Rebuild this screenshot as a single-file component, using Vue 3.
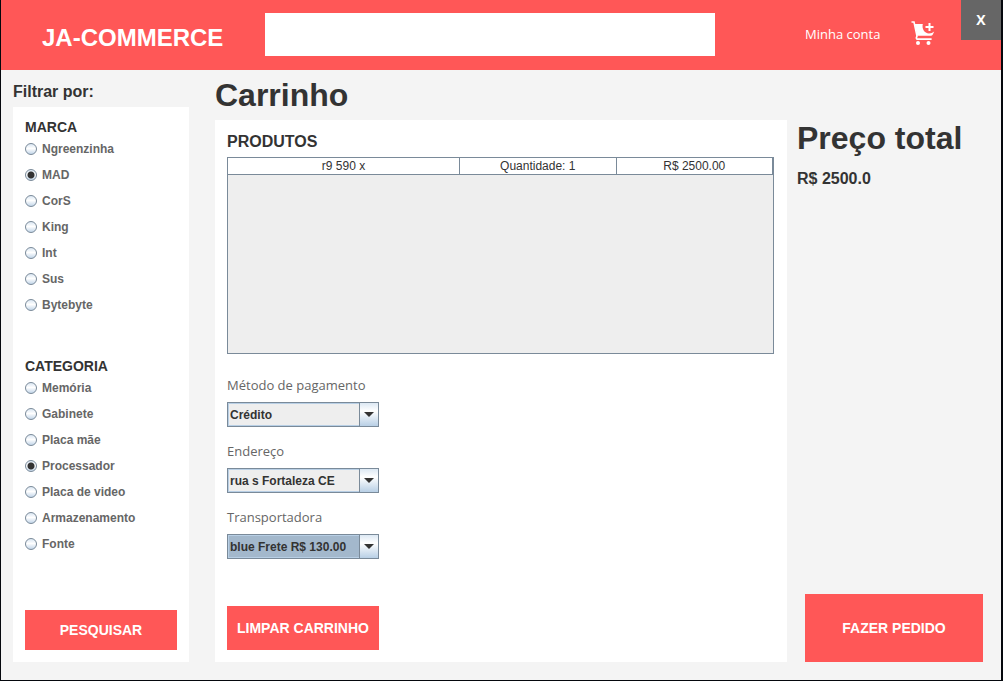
<script setup>
import { ref } from 'vue'

const search = ref('')
const brand = ref('MAD')
const category = ref('Processador')
const groups = [
  { title: 'MARCA', name: 'brand', model: brand, items: ['Ngreenzinha', 'MAD', 'CorS', 'King', 'Int', 'Sus', 'Bytebyte'] },
  { title: 'CATEGORIA', name: 'category', model: category, items: ['Memória', 'Gabinete', 'Placa mãe', 'Processador', 'Placa de video', 'Armazenamento', 'Fonte'] },
]
const products = [{ name: 'r9 590 x', quantity: 1, price: '2500.00' }]
const fields = [
  { id: 'payment', label: 'Método de pagamento', value: 'Crédito' },
  { id: 'address', label: 'Endereço', value: 'rua s Fortaleza CE' },
  { id: 'carrier', label: 'Transportadora', value: 'blue Frete R$ 130.00', active: true },
]
</script>

<template>
  <div class="window">
    <header class="topbar">
      <div class="brand">JA-COMMERCE</div>
      <input v-model="search" class="search" type="text" aria-label="Buscar" />
      <a class="account" href="#">Minha conta</a>
      <button class="cart" type="button" aria-label="Carrinho">
        <svg viewBox="0 0 24 24" width="24" height="24">
          <path d="M0.5 1H3L6 15" fill="none" stroke="#fff" stroke-width="1.6" />
          <path d="M3.6 3H11.8C10.6 8 13.5 12.2 18 12.4Q21 12.4 23.2 10.4L21.8 13.4Q21.2 14.8 19.8 14.8H6.2Z" fill="#fff" />
          <path d="M6.2 14.5L5.4 16.6Q5.2 18.2 7 18.2H20.6" fill="none" stroke="#fff" stroke-width="1.7" />
          <path d="M18.5 2V10M14.5 6H22.5" fill="none" stroke="#fff" stroke-width="2" />
          <circle cx="7" cy="22" r="2" fill="#fff" />
          <circle cx="17.5" cy="22" r="2" fill="#fff" />
        </svg>
      </button>
      <button class="close" type="button">X</button>
    </header>

    <div class="body">
      <aside class="sidebar">
        <h2 class="filter-title">Filtrar por:</h2>
        <form class="panel filters" @submit.prevent>
          <fieldset v-for="g in groups" :key="g.name" class="group">
            <legend>{{ g.title }}</legend>
            <label v-for="item in g.items" :key="item" class="option">
              <input v-model="g.model.value" type="radio" :name="g.name" :value="item" />
              {{ item }}
            </label>
          </fieldset>
          <button class="action search-button" type="submit">PESQUISAR</button>
        </form>
      </aside>

      <main class="main">
        <h1 class="heading">Carrinho</h1>
        <section class="panel order">
          <h2 class="products-title">PRODUTOS</h2>
          <div class="product-list">
            <table>
              <tbody>
                <tr v-for="p in products" :key="p.name">
                  <td class="name">{{ p.name }}</td>
                  <td>Quantidade: {{ p.quantity }}</td>
                  <td>R$ {{ p.price }}</td>
                </tr>
              </tbody>
            </table>
          </div>
          <div class="fields">
            <div v-for="f in fields" :key="f.id" class="field">
              <label :for="f.id">{{ f.label }}</label>
              <div class="combo">
                <select :id="f.id" :class="{ active: f.active }">
                  <option>{{ f.value }}</option>
                </select>
                <span class="arrow" aria-hidden="true">
                  <svg viewBox="0 0 10 5" width="10" height="5"><path d="M0 0H10L5 5Z" fill="#333" /></svg>
                </span>
              </div>
            </div>
          </div>
          <button class="action clear-button" type="button">LIMPAR CARRINHO</button>
        </section>
      </main>

      <section class="summary">
        <h2 class="total-title">Preço total</h2>
        <p class="total">R$ 2500.0</p>
        <button class="action order-button" type="button">FAZER PEDIDO</button>
      </section>
    </div>
  </div>
</template>

<style>
body {
  margin: 0;
}
</style>

<style scoped>
.window {
  box-sizing: border-box;
  min-height: 100vh;
  display: flex;
  flex-direction: column;
  border: solid #05080d;
  border-width: 0 2px 1px 1px;
  background: #f4f4f4;
  color: #333;
  font-family: "Liberation Sans", Arial, sans-serif;
}
h1,
h2,
p {
  margin: 0;
}
button {
  border: 0;
  padding: 0;
  font-family: inherit;
}
.topbar {
  display: flex;
  height: 70px;
  background: #ff5757;
  color: #fff;
}
.brand {
  width: 223px;
  padding: 24px 0 0 41px;
  box-sizing: border-box;
  flex: none;
  font-size: 24px;
  line-height: 28px;
  font-weight: bold;
}
.search {
  flex: 1;
  min-width: 0;
  height: 43px;
  margin: 13px 0 0 41px;
  padding: 0 8px;
  box-sizing: border-box;
  border: 0;
  border-radius: 0;
  background: #fff;
  font: 14px "Liberation Sans", Arial, sans-serif;
}
.account {
  width: 106px;
  margin: 24px 0 0 90px;
  color: #fff;
  font: 13px/20px "Open Sans", "Noto Sans", sans-serif;
  text-decoration: none;
  white-space: nowrap;
}
.cart {
  width: 24px;
  height: 24px;
  margin: 21px 26px 0 0;
  background: none;
}
.cart svg {
  display: block;
}
.close {
  width: 40px;
  height: 40px;
  background: #666;
  color: #fff;
  font: bold 14px/20px "Open Sans", "Noto Sans", sans-serif;
}
.body {
  flex: 1;
  display: flex;
  padding: 0 18px 18px 12px;
}
.panel {
  flex: 1;
  display: flex;
  flex-direction: column;
  padding: 12px;
  background: #fff;
}
.sidebar {
  width: 176px;
  flex: none;
  display: flex;
  flex-direction: column;
  margin-right: 26px;
}
.filter-title {
  padding-top: 7px;
  font-size: 16px;
  line-height: 30px;
}
.group {
  min-width: 0;
  margin: 0 0 40px;
  padding: 0;
  border: 0;
}
legend {
  padding: 0;
  font-size: 14px;
  line-height: 17px;
  font-weight: bold;
}
.option {
  display: flex;
  align-items: center;
  gap: 5px;
  height: 26px;
  color: #666;
  font-size: 12px;
  font-weight: bold;
}
.option input {
  appearance: none;
  width: 12px;
  height: 12px;
  margin: 0;
  border: 1px solid #7a8a99;
  border-radius: 50%;
  background: linear-gradient(#dbe7f3, #fff 45%, #c3d6e9);
}
.option input:checked {
  background: radial-gradient(circle, #333 3px, transparent 4px), linear-gradient(#dbe7f3, #fff 45%, #c3d6e9);
}
.action {
  background: #ff5757;
  color: #fff;
  font-size: 14px;
  font-weight: bold;
}
.search-button {
  height: 40px;
  margin-top: auto;
}
.main {
  flex: 1;
  min-width: 0;
  display: flex;
  flex-direction: column;
}
.heading {
  font-size: 32px;
  line-height: 50px;
}
.products-title {
  font-size: 16px;
  line-height: 20px;
}
.product-list {
  flex: 1;
  margin: 5px 1px 21px 0;
  border: 1px solid #7a8a99;
  background: #eee;
}
table {
  width: 100%;
  table-layout: fixed;
  border-collapse: separate;
  border-spacing: 0;
  background: #fff;
}
td {
  height: 16px;
  padding: 0;
  border: solid #7a8a99;
  border-width: 0 1px 1px 0;
  font-size: 12px;
  line-height: 16px;
  text-align: center;
}
.name {
  width: 231px;
}
.fields {
  display: flex;
  flex-direction: column;
  gap: 14px;
  margin-bottom: 47px;
}
.field label {
  display: block;
  margin-bottom: 7px;
  color: #666;
  font: 13px/20px "Open Sans", "Noto Sans", sans-serif;
}
.combo {
  position: relative;
  width: 152px;
  height: 25px;
}
select {
  appearance: none;
  display: block;
  width: 100%;
  height: 100%;
  padding: 0 20px 0 2px;
  border: 1px solid #7a8a99;
  border-radius: 0;
  background: #eee;
  box-shadow: inset 0 0 0 1px #b8cfe5;
  color: #333;
  font: bold 12px "Liberation Sans", Arial, sans-serif;
}
select.active {
  background: #a3b8cc;
}
.arrow {
  position: absolute;
  inset: 1px 1px 1px auto;
  width: 18px;
  display: flex;
  align-items: center;
  justify-content: center;
  border-left: 1px solid #7a8a99;
  background: linear-gradient(#dce8f3, #fff 35%, #b8cfe5);
  pointer-events: none;
}
.clear-button {
  width: 152px;
  height: 44px;
}
.summary {
  width: 186px;
  flex: none;
  display: flex;
  flex-direction: column;
  margin-left: 10px;
  padding-top: 48px;
}
.total-title {
  font-size: 32px;
  line-height: 40px;
  white-space: nowrap;
}
.total {
  margin-top: 10px;
  font-size: 16px;
  line-height: 22px;
  font-weight: bold;
}
.order-button {
  height: 68px;
  margin: auto 0 0 8px;
}
</style>
